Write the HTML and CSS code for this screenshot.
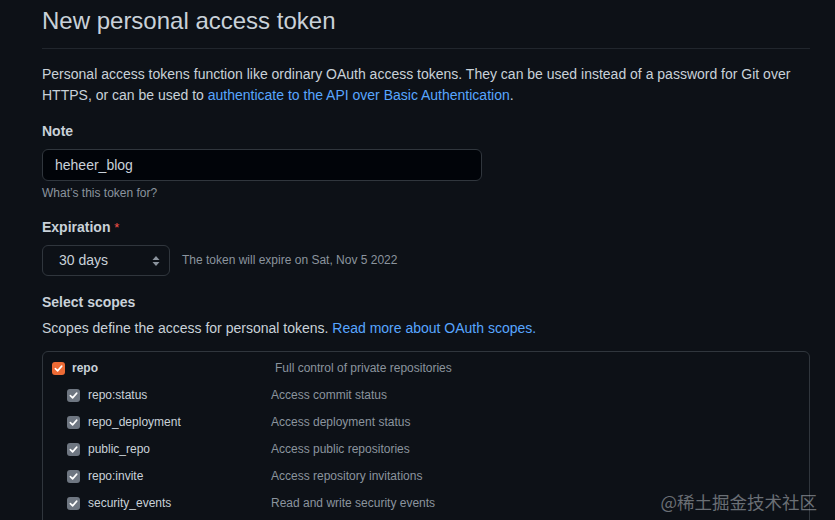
FILE: index.html
```html
<!DOCTYPE html>
<html lang="en">
<head>
<meta charset="utf-8">
<title>New personal access token</title>
<link rel="stylesheet" href="styles.css">
</head>
<body>
<main class="page">
  <h1 class="title">New personal access token</h1>
  <p class="intro">Personal access tokens function like ordinary OAuth access tokens. They can be used instead of a password for Git over HTTPS, or can be used to <a href="#">authenticate to the API over Basic Authentication</a>.</p>

  <div class="field">
    <label class="label">Note</label>
    <div class="input">heheer_blog</div>
    <div class="hint">What’s this token for?</div>
  </div>

  <div class="field">
    <label class="label">Expiration <span class="req">*</span></label>
    <div class="exp-row">
      <div class="select">
        <span>30 days</span>
        <svg class="arrows" width="8" height="12" viewBox="0 0 8 12"><path d="M4 1 L7.5 5 H0.5 Z M4 11 L0.5 7 H7.5 Z" fill="#8b949e"/></svg>
      </div>
      <span class="exp-note">The token will expire on Sat, Nov 5 2022</span>
    </div>
  </div>

  <div class="scopes-head">
    <div class="label">Select scopes</div>
    <p class="scopes-desc">Scopes define the access for personal tokens. <a href="#">Read more about OAuth scopes.</a></p>
  </div>

  <div class="scopes">
    <div class="row parent">
      <span class="cb cb-orange"><svg width="9" height="9" viewBox="0 0 10 10"><path d="M1.5 5.2 L4 7.6 L8.6 2.4" stroke="#fff" stroke-width="1.8" fill="none" stroke-linecap="round" stroke-linejoin="round"/></svg></span>
      <span class="name bold">repo</span>
      <span class="desc">Full control of private repositories</span>
    </div>
    <div class="row child">
      <span class="cb"><svg width="9" height="9" viewBox="0 0 10 10"><path d="M1.5 5.2 L4 7.6 L8.6 2.4" stroke="#fff" stroke-width="1.8" fill="none" stroke-linecap="round" stroke-linejoin="round"/></svg></span>
      <span class="name">repo:status</span>
      <span class="desc">Access commit status</span>
    </div>
    <div class="row child">
      <span class="cb"><svg width="9" height="9" viewBox="0 0 10 10"><path d="M1.5 5.2 L4 7.6 L8.6 2.4" stroke="#fff" stroke-width="1.8" fill="none" stroke-linecap="round" stroke-linejoin="round"/></svg></span>
      <span class="name">repo_deployment</span>
      <span class="desc">Access deployment status</span>
    </div>
    <div class="row child">
      <span class="cb"><svg width="9" height="9" viewBox="0 0 10 10"><path d="M1.5 5.2 L4 7.6 L8.6 2.4" stroke="#fff" stroke-width="1.8" fill="none" stroke-linecap="round" stroke-linejoin="round"/></svg></span>
      <span class="name">public_repo</span>
      <span class="desc">Access public repositories</span>
    </div>
    <div class="row child">
      <span class="cb"><svg width="9" height="9" viewBox="0 0 10 10"><path d="M1.5 5.2 L4 7.6 L8.6 2.4" stroke="#fff" stroke-width="1.8" fill="none" stroke-linecap="round" stroke-linejoin="round"/></svg></span>
      <span class="name">repo:invite</span>
      <span class="desc">Access repository invitations</span>
    </div>
    <div class="row child">
      <span class="cb"><svg width="9" height="9" viewBox="0 0 10 10"><path d="M1.5 5.2 L4 7.6 L8.6 2.4" stroke="#fff" stroke-width="1.8" fill="none" stroke-linecap="round" stroke-linejoin="round"/></svg></span>
      <span class="name">security_events</span>
      <span class="desc">Read and write security events</span>
    </div>
  </div>
</main>
<div class="watermark">@稀土掘金技术社区</div>
</body>
</html>
```

FILE: styles.css
```css
html, body {
  margin: 0;
  padding: 0;
  background: #0d1117;
  height: 100%;
  overflow: hidden;
}
body {
  font-family: "Liberation Sans", Arial, sans-serif;
  color: #c9d1d9;
  font-size: 14px;
  line-height: 21px;
}
a {
  color: #58a6ff;
  text-decoration: none;
}
.page {
  width: 768px;
  padding: 6px 0 0 42px;
}
.title {
  margin: 0;
  font-size: 24px;
  line-height: 30px;
  font-weight: 400;
  color: #c9d1d9;
  padding-bottom: 12px;
  border-bottom: 1px solid #21262d;
}
.intro {
  margin: 15px 0 0;
}
.field {
  margin-top: 15px;
}
.label {
  display: block;
  font-weight: 700;
  color: #c9d1d9;
}
.req {
  color: #f85149;
  font-weight: 400;
  font-size: 13px;
}
.input {
  margin-top: 7px;
  width: 440px;
  height: 32px;
  box-sizing: border-box;
  border: 1px solid #30363d;
  border-radius: 6px;
  background: #010409;
  padding: 0 12px;
  line-height: 30px;
  font-size: 14px;
  color: #c9d1d9;
}
.hint {
  margin-top: 3px;
  font-size: 12px;
  line-height: 18px;
  color: #8b949e;
}
.exp-row {
  margin-top: 7px;
  display: flex;
  align-items: center;
  gap: 12px;
}
.select {
  width: 128px;
  height: 31px;
  box-sizing: border-box;
  border: 1px solid #30363d;
  border-radius: 6px;
  background: #0d1117;
  display: flex;
  align-items: center;
  justify-content: space-between;
  padding: 0 9px 0 16px;
  font-size: 14px;
}
.arrows {
  display: block;
}
.exp-note {
  font-size: 12px;
  color: #8b949e;
}
.scopes-head {
  margin-top: 16px;
}
.scopes-desc {
  margin: 5px 0 0;
}
.scopes {
  margin-top: 12px;
  border: 1px solid #30363d;
  border-radius: 6px;
  padding: 3px 0 20px;
  height: 200px;
}
.row {
  display: flex;
  align-items: center;
  height: 27px;
  font-size: 12px;
}
.row.parent {
  padding-left: 9px;
}
.row.child {
  padding-left: 24px;
}
.cb {
  width: 13px;
  height: 13px;
  border-radius: 3px;
  background: #6e7681;
  display: flex;
  align-items: center;
  justify-content: center;
  flex: none;
}
.cb-orange {
  background: #ec6a35;
}
.name {
  color: #c9d1d9;
}
.parent .name {
  margin-left: 7px;
  width: 203px;
}
.child .name {
  margin-left: 8px;
  width: 183px;
}
.bold {
  font-weight: 700;
}
.desc {
  color: #8b949e;
}
.watermark {
  position: absolute;
  right: 18px;
  bottom: 6px;
  font-family: "Noto Sans CJK SC", sans-serif;
  font-size: 17.5px;
  line-height: 24px;
  color: rgba(200, 205, 212, 0.5);
}
```
